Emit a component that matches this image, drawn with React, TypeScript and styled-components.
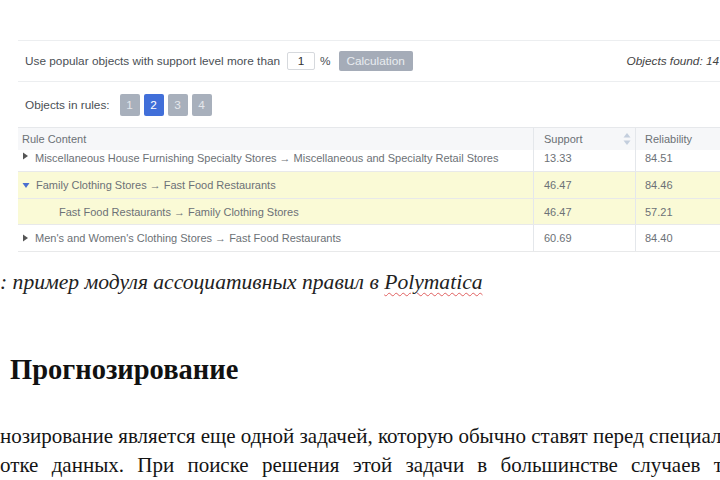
import React from "react";
import styled, { createGlobalStyle } from "styled-components";

const GlobalStyle = createGlobalStyle`
  html, body {
    margin: 0;
    padding: 0;
    background: #ffffff;
  }
  body {
    width: 720px;
    height: 480px;
    overflow: hidden;
  }
`;

const Page = styled.div`
  width: 720px;
  height: 480px;
  overflow: hidden;
  padding-top: 40px;
  box-sizing: border-box;
  background: #fff;
`;

const Panel = styled.div`
  margin-left: 18px;
  width: 760px;
  font-family: "Liberation Sans", Arial, sans-serif;
  font-size: 11px;
  color: #555a60;
`;

const ToolRow = styled.div<{ $h: number }>`
  box-sizing: border-box;
  height: ${(p) => p.$h}px;
  display: flex;
  align-items: center;
  padding-left: 7px;
  border-top: 1px solid #eceef0;
  font-size: 11.8px;
  color: #4a4f55;
`;

const Label = styled.span`
  white-space: nowrap;
`;

const NumInput = styled.div`
  box-sizing: border-box;
  width: 28px;
  height: 18px;
  margin-left: 7px;
  border: 1px solid #d6d9dd;
  border-radius: 2px;
  display: flex;
  align-items: center;
  justify-content: center;
  color: #333;
`;

const Percent = styled.span`
  margin-left: 5px;
`;

const CalcButton = styled.div`
  margin-left: 8px;
  width: 74px;
  height: 20px;
  border-radius: 2px;
  background: #a5acb8;
  color: #e9ecf0;
  display: flex;
  align-items: center;
  justify-content: center;
`;

const Found = styled.span`
  margin-left: 214px;
  font-style: italic;
  color: #444;
  white-space: nowrap;
`;

const PageButtons = styled.div`
  display: flex;
  gap: 4px;
  margin-left: 10px;
`;

const PageButton = styled.div<{ $active?: boolean }>`
  width: 20px;
  height: 22px;
  border-radius: 2px;
  background: ${(p) => (p.$active ? "#416fd9" : "#a8b0bc")};
  color: ${(p) => (p.$active ? "#ffffff" : "#e4e7eb")};
  display: flex;
  align-items: center;
  justify-content: center;
`;

const Table = styled.div`
  border-top: 1px solid #e6e8eb;
`;

const Row = styled.div<{ $h: number; $tone?: "head" | "hl" | "plain"; $top?: boolean }>`
  box-sizing: border-box;
  display: grid;
  grid-template-columns: 515px 102px 1fr;
  height: ${(p) => p.$h}px;
  background: ${(p) =>
    p.$tone === "head" ? "#f6f7f9" : p.$tone === "hl" ? "#fafad6" : "#ffffff"};
  border-bottom: ${(p) => (p.$tone === "head" ? "none" : "1px solid #e8e9ea")};
  align-items: ${(p) => (p.$top ? "start" : "center")};
`;

const Cell = styled.div<{ $pad: number; $sep?: boolean }>`
  display: flex;
  align-items: center;
  height: 100%;
  padding-left: ${(p) => p.$pad}px;
  border-left: ${(p) => (p.$sep ? "1px solid #e4e7eb" : "none")};
  white-space: nowrap;
  box-sizing: border-box;
  color: #6c7176;
`;

const TopCell = styled(Cell)`
  align-items: flex-start;
  padding-top: 2px;
`;

const HeadCell = styled(Cell)`
  justify-content: space-between;
  padding-right: 4px;
  color: #6a6f75;
`;

const Arrow = styled.svg`
  flex: none;
  margin-right: 6px;
`;

const Caption = styled.div`
  margin-top: 18px;
  font-family: "Liberation Serif", "Times New Roman", serif;
  font-style: italic;
  font-size: 21.6px;
  line-height: 24px;
  color: #222;
  white-space: nowrap;
`;

const Spell = styled.span`
  text-decoration: underline wavy #e06060;
  text-decoration-thickness: 1px;
  text-underline-offset: 3px;
`;

const Heading = styled.h2`
  margin: 60px 0 0 10px;
  font-family: "Liberation Serif", "Times New Roman", serif;
  font-weight: bold;
  font-size: 28.5px;
  line-height: 32px;
  color: #111;
`;

const Para = styled.div`
  margin-top: 36px;
  font-family: "Liberation Serif", "Times New Roman", serif;
  font-size: 21px;
  line-height: 29px;
  color: #141414;
`;

const Line = styled.div<{ $ws?: number }>`
  white-space: nowrap;
  word-spacing: ${(p) => p.$ws ?? 0}px;
`;

const Right = () => (
  <Arrow width="7" height="8" viewBox="0 0 7 8">
    <path d="M1 0.5 L6 4 L1 7.5 Z" fill="#555" />
  </Arrow>
);

const Down = () => (
  <Arrow width="8" height="7" viewBox="0 0 8 7">
    <path d="M0.5 1 L7.5 1 L4 6 Z" fill="#4a6fd0" />
  </Arrow>
);

const SortIcon = () => (
  <svg width="8" height="14" viewBox="0 0 8 14">
    <path d="M4 1 L7.5 5.5 L0.5 5.5 Z" fill="#c3cedd" />
    <path d="M4 13 L7.5 8.5 L0.5 8.5 Z" fill="#c3cedd" />
  </svg>
);

const rules = [
  { text: "Family Clothing Stores → Fast Food Restaurants", s: "46.47", r: "84.46", hl: true, open: true },
  { text: "Fast Food Restaurants → Family Clothing Stores", s: "46.47", r: "57.21", hl: true, child: true },
  { text: "Men's and Women's Clothing Stores → Fast Food Restaurants", s: "60.69", r: "84.40" },
];

export default function App() {
  return (
    <Page>
      <GlobalStyle />
      <Panel>
        <ToolRow $h={41}>
          <Label>Use popular objects with support level more than</Label>
          <NumInput>1</NumInput>
          <Percent>%</Percent>
          <CalcButton>Calculation</CalcButton>
          <Found>Objects found: 14</Found>
        </ToolRow>
        <ToolRow $h={46}>
          <Label>Objects in rules:</Label>
          <PageButtons>
            {[1, 2, 3, 4].map((n) => (
              <PageButton key={n} $active={n === 2}>
                {n}
              </PageButton>
            ))}
          </PageButtons>
        </ToolRow>
        <Table>
          <Row $h={22} $tone="head">
            <Cell $pad={4}>Rule Content</Cell>
            <HeadCell $pad={10} $sep>
              Support
              <SortIcon />
            </HeadCell>
            <Cell $pad={9} $sep>
              Reliability
            </Cell>
          </Row>
          <Row $h={22} $top>
            <TopCell $pad={4}>
              <Right />
              Miscellaneous House Furnishing Specialty Stores → Miscellaneous and Specialty Retail Stores
            </TopCell>
            <TopCell $pad={10} $sep>
              13.33
            </TopCell>
            <TopCell $pad={9} $sep>
              84.51
            </TopCell>
          </Row>
          {rules.map((r, i) => (
            <Row key={i} $h={i === 1 ? 26 : 27} $tone={r.hl ? "hl" : "plain"}>
              <Cell $pad={r.child ? 41 : 4}>
                {!r.child && (r.open ? <Down /> : <Right />)}
                {r.text}
              </Cell>
              <Cell $pad={10} $sep>
                {r.s}
              </Cell>
              <Cell $pad={9} $sep>
                {r.r}
              </Cell>
            </Row>
          ))}
        </Table>
      </Panel>
      <Caption>
        : пример модуля ассоциативных правил в <Spell>Polymatica</Spell>
      </Caption>
      <Heading>Прогнозирование</Heading>
      <Para>
        <Line>нозирование является еще одной задачей, которую обычно ставят перед специалистами по</Line>
        <Line $ws={8}>отке данных. При поиске решения этой задачи в большинстве случаев требуется</Line>
      </Para>
    </Page>
  );
}
